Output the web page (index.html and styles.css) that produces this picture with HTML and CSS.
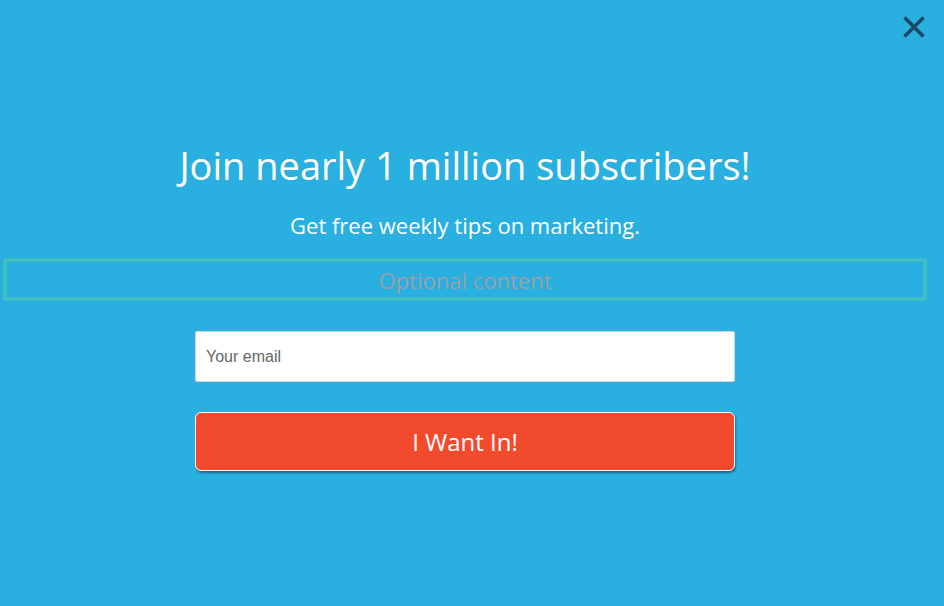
FILE: index.html
```html
<!DOCTYPE html>
<html>
<head>
<meta charset="utf-8">
<link rel="stylesheet" href="styles.css">
</head>
<body>
<div class="page">
  <button class="close" aria-label="Close">
    <svg width="24" height="24" viewBox="0 0 24 24"><path d="M2.5 2.5 L21.5 21.5 M21.5 2.5 L2.5 21.5" stroke="#1b4a68" stroke-width="3.6" stroke-linecap="butt" fill="none"/></svg>
  </button>
  <h1 class="title">Join nearly 1 million subscribers!</h1>
  <p class="subtitle">Get free weekly tips on marketing.</p>
  <div class="optional">Optional content</div>
  <form class="form">
    <input class="email" type="email" placeholder="Your email">
    <button class="submit" type="button">I Want In!</button>
  </form>
</div>
</body>
</html>
```

FILE: styles.css
```css
html, body {
  margin: 0;
  padding: 0;
  height: 100%;
  background: #29afe0;
}
body {
  font-family: "Open Sans", "Liberation Sans", sans-serif;
  color: #fff;
}
.page {
  position: relative;
  width: 930px;
  height: 606px;
  padding-top: 139px;
  box-sizing: border-box;
  display: flex;
  flex-direction: column;
  align-items: center;
}
.close {
  position: absolute;
  top: 15px;
  right: 4px;
  width: 24px;
  height: 24px;
  padding: 0;
  border: 0;
  background: none;
  cursor: pointer;
}
.close svg { display: block; }
.title {
  margin: 0;
  font-size: 38px;
  font-weight: 400;
  line-height: 52px;
  text-align: center;
}
.subtitle {
  margin: 18px 0 0;
  font-size: 22px;
  line-height: 32px;
  text-align: center;
}
.optional {
  align-self: flex-start;
  margin: 18px 0 0 4px;
  width: 922px;
  height: 41px;
  box-sizing: border-box;
  border: 2px solid #44c4b8;
  box-shadow: 0 0 3px #44c4b8, inset 0 0 3px #44c4b8;
  color: #9b9fa3;
  font-size: 22px;
  line-height: 39px;
  text-align: center;
}
.form {
  margin: 31px 0 0;
  width: 540px;
  display: flex;
  flex-direction: column;
  gap: 30px;
}
.email {
  height: 51px;
  box-sizing: border-box;
  border: 1px solid #c9d4dc;
  border-radius: 2px;
  padding: 0 10px;
  font-family: "Liberation Sans", Arial, sans-serif;
  font-size: 16px;
  color: #333;
  background: #fff;
  outline: none;
}
.email::placeholder { color: #666; }
.submit {
  height: 59px;
  box-sizing: border-box;
  border: 1px solid #fff;
  border-radius: 6px;
  background: #f24a2d;
  color: #fff;
  font-family: "Open Sans", "Liberation Sans", sans-serif;
  font-size: 24px;
  box-shadow: 1px 2px 2px rgba(20, 60, 90, 0.6);
  cursor: pointer;
}
```
